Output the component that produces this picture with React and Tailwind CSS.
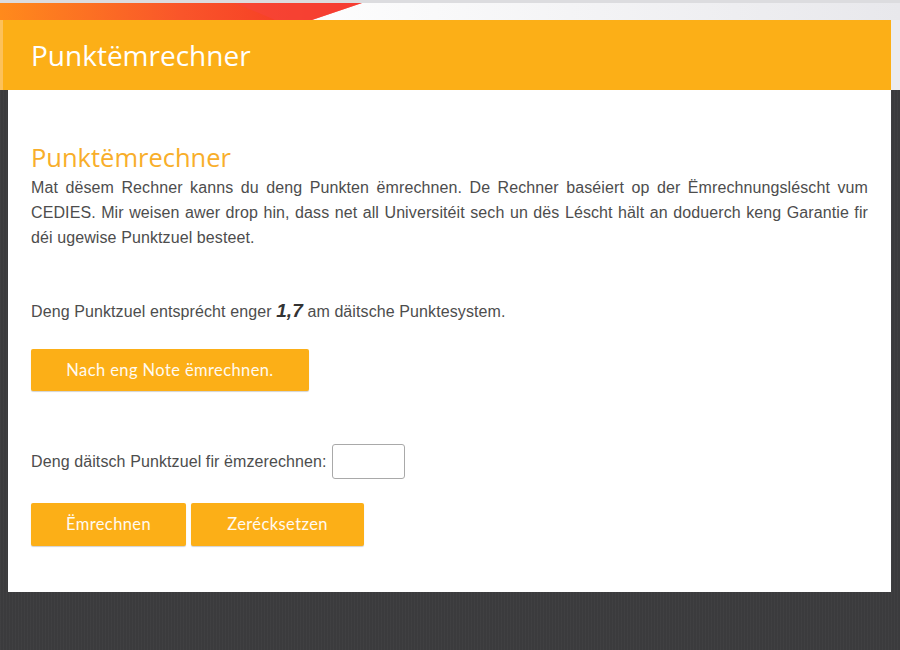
import React, { useState } from "react";

const btn =
  "h-full px-[35px] bg-[#fcaf17] text-[#fffaf0] rounded-[2px] shadow-[0_1px_1px_rgba(0,0,0,0.18)] font-['Lato',sans-serif] text-[16.5px] tracking-[0.4px]";

const TopBand = () => (
  <svg width="900" height="17" viewBox="0 0 900 17" preserveAspectRatio="none" className="block w-full">
    <defs>
      <linearGradient id="warm" x1="0" y1="0" x2="1" y2="0">
        <stop offset="0" stopColor="#ff8a1c" />
        <stop offset="0.5" stopColor="#f9552a" />
        <stop offset="1" stopColor="#f42f22" />
      </linearGradient>
      <linearGradient id="cool" x1="0" y1="0" x2="1" y2="0">
        <stop offset="0" stopColor="#fbe3e4" />
        <stop offset="0.3" stopColor="#ffffff" />
        <stop offset="1" stopColor="#e8e8ec" />
      </linearGradient>
    </defs>
    <rect x="0" y="0" width="900" height="17" fill="url(#cool)" />
    <polygon points="0,0 362,0 312,17 0,17" fill="url(#warm)" />
    <polygon points="235,0 362,0 312,17 275,17" fill="#f6453c" opacity="0.6" />
  </svg>
);

export default function App() {
  const [val, setVal] = useState("");

  return (
    <div className="min-h-screen w-[900px] bg-[#3b3b3d] bg-[repeating-linear-gradient(90deg,rgba(255,255,255,0.025)_0px,rgba(255,255,255,0.025)_1px,transparent_1px,transparent_3px)]">
      <div className="h-[3px] bg-[#dcdcdf]" />
      <TopBand />

      {/* Header */}
      <div className="h-[70px] flex bg-[#ececef]">
        <div className="w-[891px] h-full bg-[#fcaf17] border-l-[3px] border-[#fdc15a] flex items-center pl-[28px]">
          <h1 className="text-white text-[28px] font-['Open_Sans',sans-serif] leading-none pb-[1px]">
            Punktëmrechner
          </h1>
        </div>
      </div>

      {/* Card */}
      <div className="ml-[8px] w-[883px] h-[502px] bg-white px-[23px] pt-[52px] font-['Liberation_Sans',Arial,sans-serif] text-[16px] tracking-[0.1px] text-[#4d4d4d]">
        <h2 className="text-[#f8ae2a] text-[25.5px] leading-[30px] tracking-normal font-['Open_Sans',sans-serif]">
          Punktëmrechner
        </h2>
        <p className="mt-[3px] leading-[25px] text-justify">
          Mat dësem Rechner kanns du deng Punkten ëmrechnen. De Rechner baséiert op der Ëmrechnungsléscht vum
          CEDIES. Mir weisen awer drop hin, dass net all Universitéit sech un dës Léscht hält an doduerch keng
          Garantie fir déi ugewise Punktzuel besteet.
        </p>

        <p className="mt-[48px] leading-[25px]">
          Deng Punktzuel entsprécht enger{" "}
          <b className="italic text-[19px] text-[#333]">1,7</b> am däitsche Punktesystem.
        </p>

        <div className="mt-[25px] h-[42px]">
          <button className={btn + " w-[278px] px-0"}>Nach eng Note ëmrechnen.</button>
        </div>

        <div className="mt-[53px] h-[35px] flex items-center gap-[5px]">
          <label htmlFor="pz">Deng däitsch Punktzuel fir ëmzerechnen:</label>
          <input
            id="pz"
            value={val}
            onChange={(e) => setVal(e.target.value)}
            className="w-[73px] h-[35px] border border-[#a9a9a9] rounded-[3px] px-2 outline-0"
          />
        </div>

        <div className="mt-[24px] h-[43px] flex gap-[5px]">
          <button className={btn}>Ëmrechnen</button>
          <button className={btn + " w-[173px] px-0"}>Zerécksetzen</button>
        </div>
      </div>
    </div>
  );
}
